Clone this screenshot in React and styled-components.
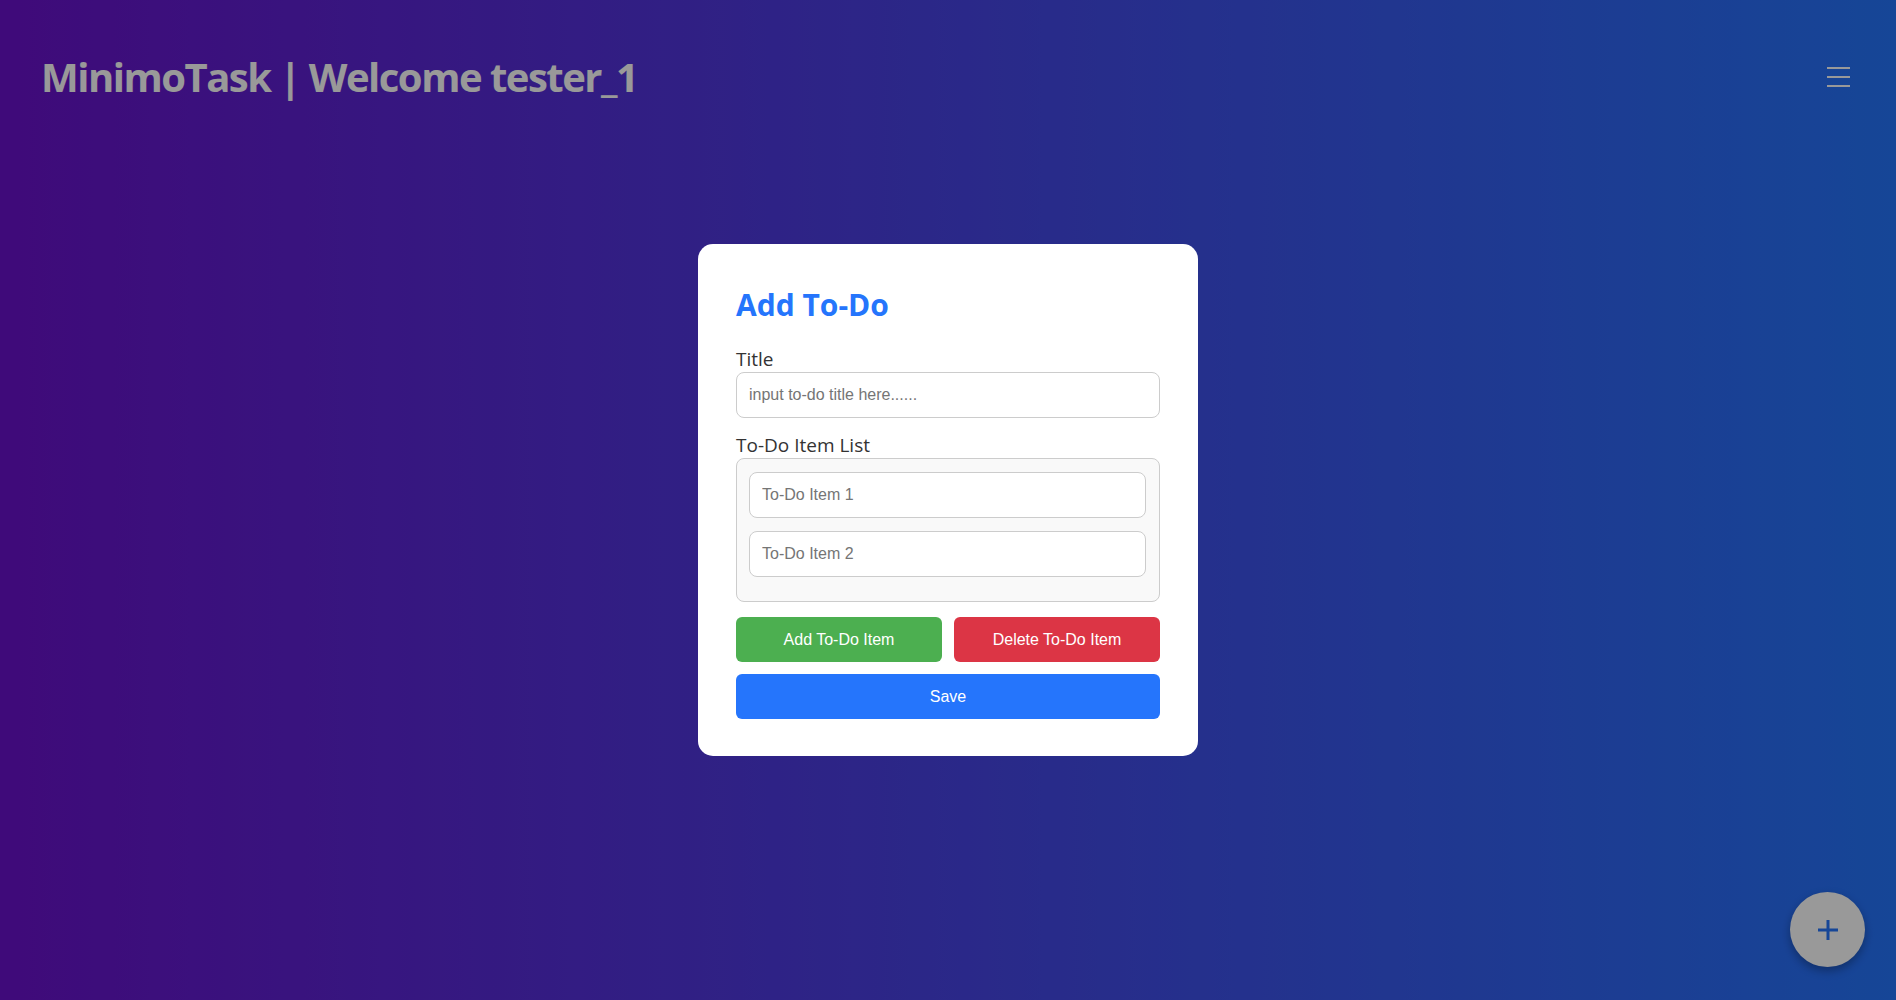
import React from "react";
import styled, { createGlobalStyle } from "styled-components";

const GlobalStyle = createGlobalStyle`
  html, body {
    margin: 0;
    padding: 0;
    height: 100%;
  }
  body {
    font-family: "Open Sans", "Noto Sans", sans-serif;
  }
  * {
    box-sizing: border-box;
  }
`;

const Page = styled.div`
  min-height: 100vh;
  background: linear-gradient(to right, #6a11cb, #2575fc);
`;

const Header = styled.header`
  display: flex;
  align-items: center;
  justify-content: space-between;
  padding: 49px 46px 0 41px;
`;

const Brand = styled.h1`
  margin: 0;
  font-size: 40px;
  font-weight: 700;
  color: #fff;
  letter-spacing: -1.5px;
`;

const MenuButton = styled.button`
  background: none;
  border: none;
  padding: 0;
  width: 23px;
  height: 20px;
  display: flex;
  flex-direction: column;
  justify-content: space-between;
  cursor: pointer;
`;

const MenuBar = styled.span`
  display: block;
  height: 2px;
  background: #fff;
`;

const Fab = styled.button`
  position: fixed;
  right: 31px;
  bottom: 33px;
  width: 75px;
  height: 75px;
  border-radius: 50%;
  border: none;
  background: #fff;
  box-shadow: 0 4px 10px rgba(0, 0, 0, 0.3);
  display: flex;
  align-items: center;
  justify-content: center;
  cursor: pointer;
`;

const Overlay = styled.div`
  position: fixed;
  inset: 0;
  background: rgba(0, 0, 0, 0.4);
  display: flex;
  align-items: center;
  justify-content: center;
`;

const Card = styled.div`
  width: 500px;
  background: #fff;
  border-radius: 15px;
  padding: 37px 38px 37px;
  display: flex;
  flex-direction: column;
`;

const Heading = styled.h2`
  margin: 6px 0 24px;
  font-size: 30px;
  font-weight: 700;
  line-height: 1.2;
  color: #2575fc;
`;

const Field = styled.div`
  display: flex;
  flex-direction: column;
  margin-bottom: 15px;
`;

const Label = styled.label`
  font-size: 19px;
  line-height: 25px;
  color: #333;
`;

const Input = styled.input`
  height: 46px;
  width: 100%;
  padding: 0 12px;
  border: 1px solid #ccc;
  border-radius: 8px;
  font-family: "Liberation Sans", Arial, sans-serif;
  font-size: 16px;
  color: #333;
  background: #fff;
  outline: none;
  &::placeholder {
    color: #757575;
  }
`;

const ItemBox = styled.div`
  display: flex;
  flex-direction: column;
  gap: 13px;
  padding: 13px 13px 24px 12px;
  background: #f9f9f9;
  border: 1px solid #ccc;
  border-radius: 8px;
`;

const ButtonRow = styled.div`
  display: grid;
  grid-template-columns: 1fr 1fr;
  gap: 12px;
`;

const Button = styled.button`
  height: 45px;
  width: 100%;
  border: none;
  border-radius: 6px;
  background: ${(p) => p.$bg};
  color: #fff;
  font-family: "Liberation Sans", Arial, sans-serif;
  font-size: 16px;
  cursor: pointer;
`;

const SaveButton = styled(Button)`
  margin-top: 12px;
`;

export default function App() {
  return (
    <Page>
      <GlobalStyle />
      <Header>
        <Brand>MinimoTask | Welcome tester_1</Brand>
        <MenuButton aria-label="menu">
          <MenuBar />
          <MenuBar />
          <MenuBar />
        </MenuButton>
      </Header>
      <Fab aria-label="add">
        <svg width="22" height="22" viewBox="0 0 22 22">
          <path d="M11 1v20M1 11h20" stroke="#2575fc" strokeWidth="3" />
        </svg>
      </Fab>
      <Overlay>
        <Card>
          <Heading>Add To-Do</Heading>
          <Field>
            <Label>Title</Label>
            <Input placeholder="input to-do title here......" />
          </Field>
          <Field>
            <Label>To-Do Item List</Label>
            <ItemBox>
              <Input placeholder="To-Do Item 1" />
              <Input placeholder="To-Do Item 2" />
            </ItemBox>
          </Field>
          <ButtonRow>
            <Button $bg="#4caf50">Add To-Do Item</Button>
            <Button $bg="#dc3545">Delete To-Do Item</Button>
          </ButtonRow>
          <SaveButton $bg="#2575fc">Save</SaveButton>
        </Card>
      </Overlay>
    </Page>
  );
}
